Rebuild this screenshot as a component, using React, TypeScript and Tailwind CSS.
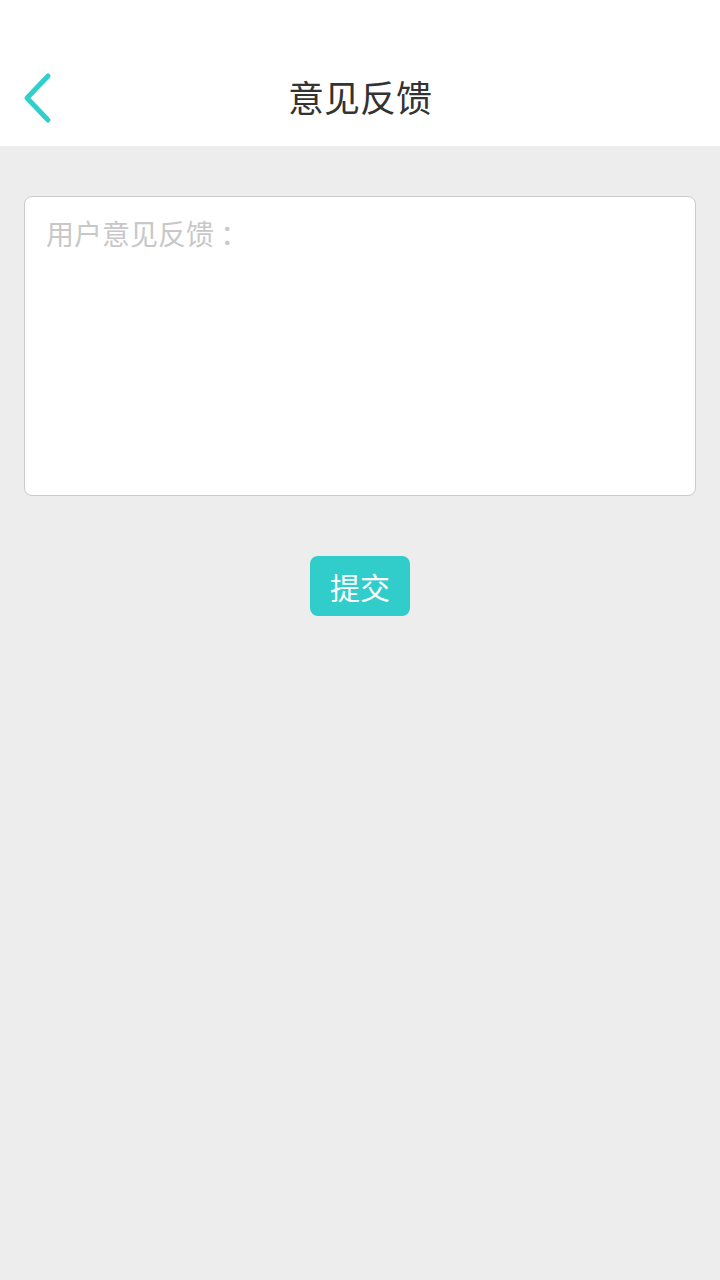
const font = { fontFamily: '"Noto Sans CJK SC", "Noto Sans", sans-serif' }

export default function App() {
  return (
    <div className="min-h-[1280px] bg-[#ededed]" style={font}>
      <header className="relative flex h-[146px] items-end justify-center bg-white pb-[24px]">
        <button type="button" className="absolute left-[20px] top-[70px] h-[56px] w-[36px]" aria-label="返回">
          <svg width="36" height="56" viewBox="0 0 36 56" fill="none">
            <path d="M28 6 L7 28 L28 50" stroke="#2fcfcb" strokeWidth="5" strokeLinecap="round" strokeLinejoin="round" />
          </svg>
        </button>
        <h1 className="text-[36px] leading-[52px] text-[#333333]">意见反馈</h1>
      </header>
      <main className="px-[24px] pt-[50px]">
        <textarea
          className="block h-[300px] w-full resize-none rounded-[8px] border border-[#cccccc] bg-white px-[21px] py-[14px] text-[28px] leading-[44px] text-[#333] placeholder:text-[#c8c8c8] outline-none"
          style={{ fontFamily: '"Noto Sans CJK SC", sans-serif' }}
          placeholder="用户意见反馈 ："
        />
        <div className="flex justify-center pt-[60px]">
          <button
            type="button"
            className="flex h-[60px] w-[100px] items-center justify-center rounded-[8px] bg-[#30cdcb] text-[30px] text-white"
          >
            提交
          </button>
        </div>
      </main>
    </div>
  )
}
